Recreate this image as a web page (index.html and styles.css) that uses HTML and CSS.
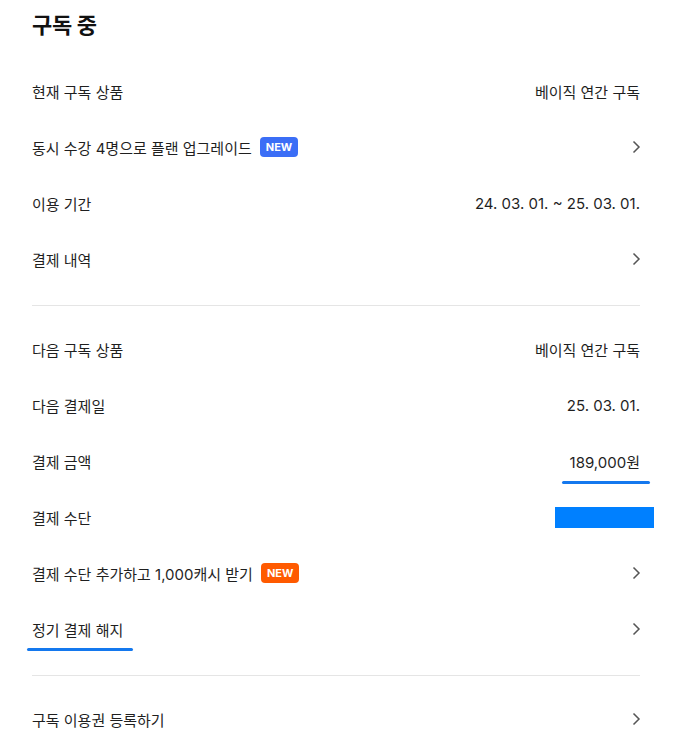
FILE: index.html
```html
<!DOCTYPE html>
<html lang="ko">
<head>
    <meta charset="UTF-8">
    <meta name="viewport" content="width=device-width, initial-scale=1.0">
    <title>구독 중</title>
    <link rel="stylesheet" href="styles.css">
</head>
<body>
    <div class="page">
        <h2 class="title">구독 중</h2>

        <!-- 현재 구독 -->
        <div class="group">
            <div class="row">
                <span class="label">현재 구독 상품</span>
                <span class="value">베이직 연간 구독</span>
            </div>
            <div class="row link">
                <span class="label">동시 수강 4명으로 플랜 업그레이드 <span class="badge blue">NEW</span></span>
                <svg class="chevron" viewBox="0 0 16 16"><path d="M5.5 2.5 L11 8 L5.5 13.5"/></svg>
            </div>
            <div class="row">
                <span class="label">이용 기간</span>
                <span class="value">24. 03. 01. ~ 25. 03. 01.</span>
            </div>
            <div class="row link">
                <span class="label">결제 내역</span>
                <svg class="chevron" viewBox="0 0 16 16"><path d="M5.5 2.5 L11 8 L5.5 13.5"/></svg>
            </div>
        </div>

        <hr class="divider">

        <!-- 다음 결제 -->
        <div class="group">
            <div class="row">
                <span class="label">다음 구독 상품</span>
                <span class="value">베이직 연간 구독</span>
            </div>
            <div class="row">
                <span class="label">다음 결제일</span>
                <span class="value">25. 03. 01.</span>
            </div>
            <div class="row">
                <span class="label">결제 금액</span>
                <span class="value marked">189,000원</span>
            </div>
            <div class="row">
                <span class="label">결제 수단</span>
                <span class="value"><span class="redact"></span></span>
            </div>
            <div class="row link">
                <span class="label">결제 수단 추가하고 1,000캐시 받기 <span class="badge orange">NEW</span></span>
                <svg class="chevron" viewBox="0 0 16 16"><path d="M5.5 2.5 L11 8 L5.5 13.5"/></svg>
            </div>
            <div class="row link">
                <span class="label marked-left">정기 결제 해지</span>
                <svg class="chevron" viewBox="0 0 16 16"><path d="M5.5 2.5 L11 8 L5.5 13.5"/></svg>
            </div>
        </div>

        <hr class="divider">

        <div class="group">
            <div class="row link">
                <span class="label">구독 이용권 등록하기</span>
                <svg class="chevron" viewBox="0 0 16 16"><path d="M5.5 2.5 L11 8 L5.5 13.5"/></svg>
            </div>
        </div>
    </div>
</body>
</html>
```

FILE: styles.css
```css
/* 기본 스타일 */
body {
    font-family: "Inter", "Noto Sans CJK KR", "Noto Sans", sans-serif;
    margin: 0;
    background: #fff;
    color: #1f1f1f;
}
.page {
    width: 608px;
    margin-left: 32px;
}
.title {
    font-size: 22px;
    font-weight: bold;
    margin: 0;
    height: 63px;
    line-height: 50px;
    color: #111;
    letter-spacing: -0.3px;
}
.row {
    display: flex;
    align-items: center;
    justify-content: space-between;
    height: 56px;
    font-size: 15px;
}
.label {
    display: flex;
    align-items: center;
    gap: 8px;
    position: relative;
}
.value {
    position: relative;
}
.badge {
    display: inline-block;
    font-size: 11px;
    font-weight: bold;
    color: #fff;
    height: 20px;
    line-height: 20px;
    padding: 0 6px;
    border-radius: 4px;
}
.blue {
    background: #3b6ef6;
}
.orange {
    background: #ff5a00;
}
.chevron {
    width: 16px;
    height: 16px;
    margin-right: -4px;
    fill: none;
    stroke: #555;
    stroke-width: 1.5;
}
.divider {
    border: none;
    border-top: 1px solid #e5e5e5;
    margin: 18px 0 15px;
}
/* 표시선 */
.marked::after {
    content: "";
    position: absolute;
    left: -8px;
    right: -10px;
    bottom: -12px;
    height: 3px;
    border-radius: 2px;
    background: #1478ee;
}
.marked-left::after {
    content: "";
    position: absolute;
    left: -5px;
    width: 106px;
    bottom: -11px;
    height: 3px;
    border-radius: 2px;
    background: #1478ee;
}
.redact {
    display: block;
    width: 99px;
    height: 21px;
    margin-right: -14px;
    background: #0080ff;
}
```
